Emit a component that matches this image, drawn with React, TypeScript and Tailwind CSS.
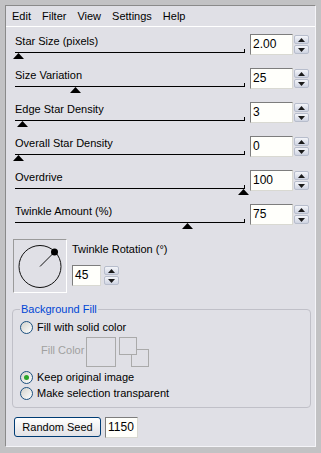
import React from "react";

const rows = [
  { label: "Star Size (pixels)", value: "2.00", thumb: 18 },
  { label: "Size Variation", value: "25", thumb: 75 },
  { label: "Edge Star Density", value: "3", thumb: 22 },
  { label: "Overall Star Density", value: "0", thumb: 18 },
  { label: "Overdrive", value: "100", thumb: 243 },
  { label: "Twinkle Amount (%)", value: "75", thumb: 187 },
];

function Arrow({ up }: { up: boolean }) {
  return (
    <svg width="7" height="4" viewBox="0 0 7 4">
      {up ? <polygon points="3.5,0 7,4 0,4" fill="#1b1b1b" /> : <polygon points="0,0 7,0 3.5,4" fill="#1b1b1b" />}
    </svg>
  );
}

function Spinner() {
  return (
    <div className="flex flex-col gap-[1px] w-[15px]">
      <div className="h-[9px] rounded-[2px] border border-[#b7bdcc] bg-linear-to-b from-[#f4f5f9] to-[#cfd4e2] flex items-center justify-center">
        <Arrow up />
      </div>
      <div className="h-[9px] rounded-[2px] border border-[#b7bdcc] bg-linear-to-b from-[#f4f5f9] to-[#cfd4e2] flex items-center justify-center">
        <Arrow up={false} />
      </div>
    </div>
  );
}

function Field({ value, w }: { value: string; w: string }) {
  return (
    <div
      className={`${w} h-[21px] border border-t-[#7d7d7d] border-l-[#7d7d7d] border-r-[#d9d9d2] border-b-[#d9d9d2] bg-[#fffffb] text-[12px] leading-[19px] pl-[2px] text-black`}
    >
      {value}
    </div>
  );
}

function Radio({ checked }: { checked?: boolean }) {
  return (
    <span className="w-[13px] h-[13px] rounded-full border border-[#1c5180] bg-linear-to-br from-[#d2d2cc] to-white flex items-center justify-center shrink-0">
      {checked && <span className="w-[5px] h-[5px] rounded-full bg-[#2aa52a]" />}
    </span>
  );
}

export default function App() {
  return (
    <div className="w-[321px] h-[453px] bg-[#c2c2c4] pl-[5px] pt-[5px] font-['Liberation_Sans',Arial,sans-serif] text-black">
      <div className="w-[311px] h-[442px] bg-[#e0e0e6] border border-t-[#8a8a8a] border-l-[#8a8a8a] border-r-[#f4f4f8] border-b-[#f4f4f8]">
        {/* menu */}
        <div className="h-[21px] border-b border-white flex items-center gap-[11px] pl-[6px] text-[11px] leading-[13px]">
          <span>Edit</span>
          <span>Filter</span>
          <span>View</span>
          <span>Settings</span>
          <span>Help</span>
        </div>

        {/* slider rows */}
        <div className="pt-[6px]">
          {rows.map((r) => (
            <div key={r.label} className="flex h-[34px]">
              <div className="ml-[9px] w-[230px]">
                <div className="mt-[2px] text-[11px] leading-[13px]">{r.label}</div>
                <div className="relative mt-[1px] h-[4px] border-b border-r border-black">
                  <svg
                    className="absolute top-[4px]"
                    style={{ left: r.thumb - 15 - 5.5 }}
                    width="11"
                    height="6"
                    viewBox="0 0 11 6"
                  >
                    <polygon points="5.5,0 11,6 0,6" fill="#000" />
                  </svg>
                </div>
              </div>
              <div className="ml-[5px] mt-[1px]">
                <Field value={r.value} w="w-[43px]" />
              </div>
              <div className="ml-[1px] mt-[2px]">
                <Spinner />
              </div>
            </div>
          ))}
        </div>

        {/* rotation */}
        <div className="flex mt-[2px] ml-[7px]">
          <div className="w-[54px] h-[54px] border border-t-[#9a9a9a] border-l-[#9a9a9a] border-r-white border-b-white flex items-center justify-center">
            <svg width="52" height="52" viewBox="0 0 52 52">
              <circle cx="26" cy="26.5" r="21" fill="none" stroke="#111" strokeWidth="1" />
              <line x1="26" y1="26.5" x2="40.5" y2="12" stroke="#111" strokeWidth="1" />
              <circle cx="40.5" cy="12" r="3.5" fill="#000" />
            </svg>
          </div>
          <div className="ml-[5px]">
            <div className="mt-[4px] text-[11px] leading-[13px]">Twinkle Rotation (°)</div>
            <div className="flex mt-[9px]">
              <Field value="45" w="w-[29px]" />
              <div className="ml-[3px] mt-[1px]">
                <Spinner />
              </div>
            </div>
          </div>
        </div>

        {/* background fill group */}
        <fieldset className="ml-[6px] mt-[10px] w-[299px] rounded-[4px] border border-[#c0c0c8] pb-[7px]">
          <legend className="ml-[7px] px-[1px] text-[11px] leading-[13px] text-[#0046d5]">Background Fill</legend>
          <div className="flex items-center h-[14px] mt-[4px] ml-[7px] gap-[4px] text-[11px] leading-[13px]">
            <Radio />
            <span>Fill with solid color</span>
          </div>
          <div className="flex mt-[3px] h-[30px]">
            <div className="ml-[28px] w-[45px] pt-[7px] text-[11px] leading-[13px] text-[#a0a0a0]">Fill Color</div>
            <div className="w-[30px] h-[30px] border border-[#aaaaaa]" />
            <svg className="ml-[3px]" width="30" height="30" viewBox="0 0 30 30">
              <rect x="12.5" y="12.5" width="17" height="17" fill="none" stroke="#aaaaaa" />
              <rect x="0.5" y="0.5" width="17" height="17" fill="#e0e0e6" stroke="#aaaaaa" />
            </svg>
          </div>
          <div className="flex items-center h-[14px] mt-[3px] ml-[7px] gap-[4px] text-[11px] leading-[13px]">
            <Radio checked />
            <span>Keep original image</span>
          </div>
          <div className="flex items-center h-[14px] mt-[2px] ml-[7px] gap-[4px] text-[11px] leading-[13px]">
            <Radio />
            <span>Make selection transparent</span>
          </div>
        </fieldset>

        {/* random seed */}
        <div className="flex mt-[9px] ml-[8px]">
          <div className="w-[87px] h-[20px] rounded-[3px] border border-[#003c74] bg-linear-to-b from-white to-[#e2e2e6] flex items-center justify-center text-[11px] leading-[13px]">
            Random Seed
          </div>
          <div className="ml-[4px]">
            <Field value="1150" w="w-[33px]" />
          </div>
        </div>
      </div>
    </div>
  );
}
